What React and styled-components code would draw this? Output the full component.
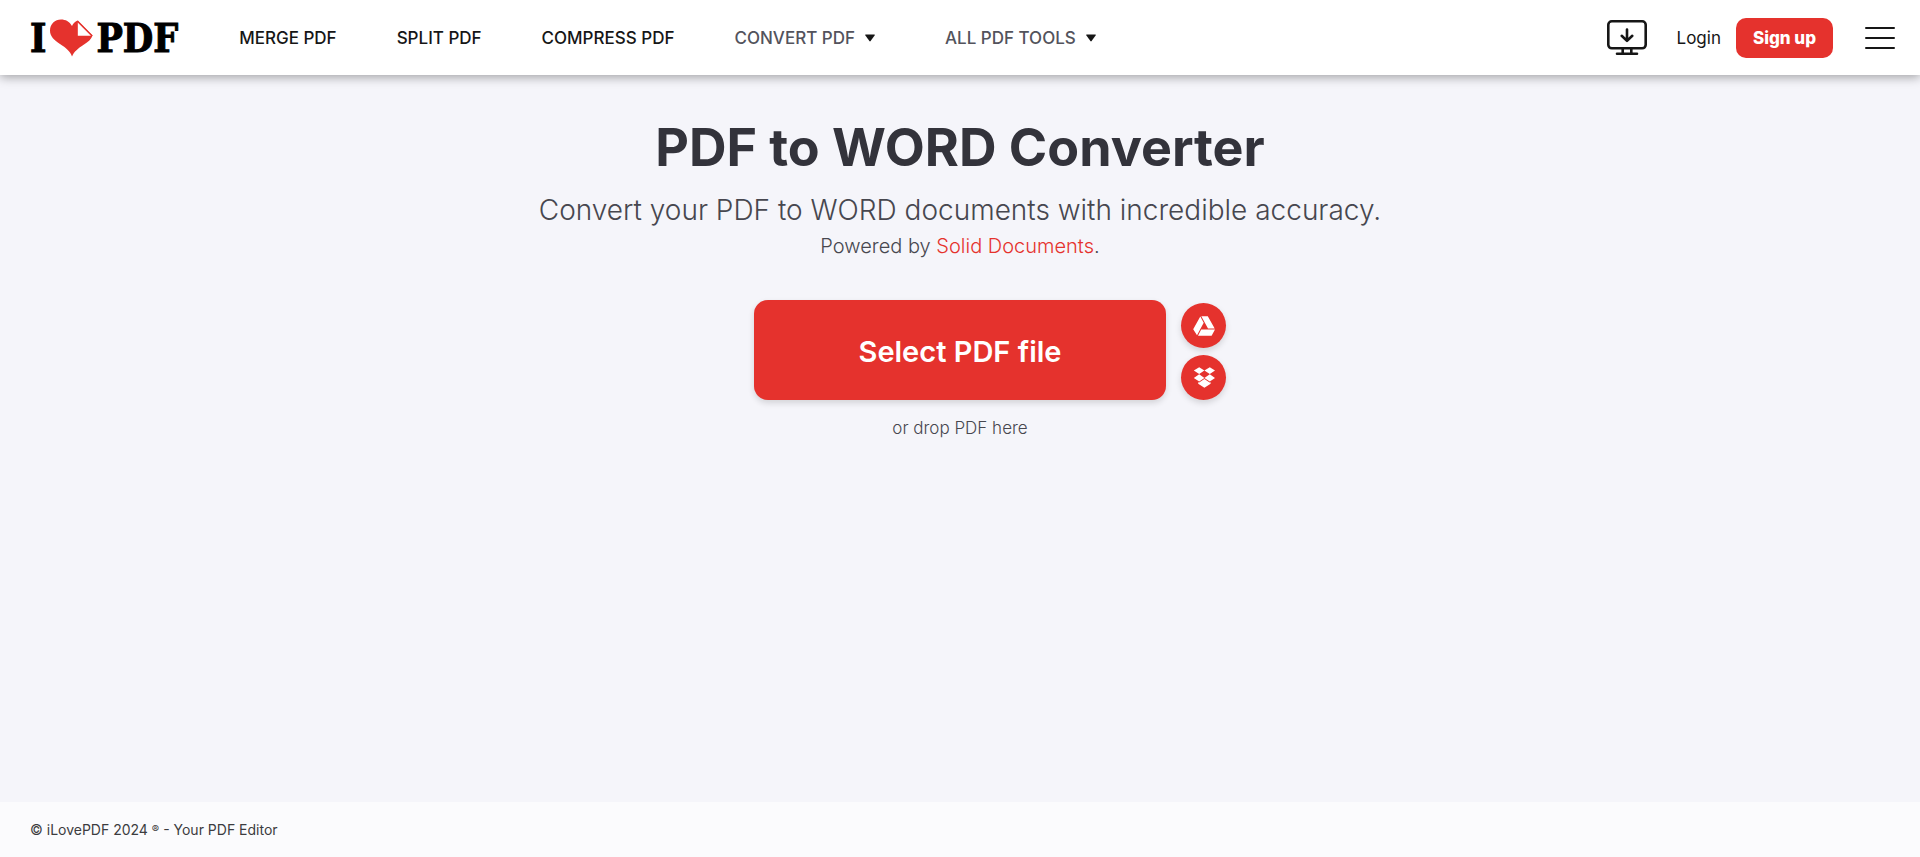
import React from 'react';
import styled, { createGlobalStyle, ThemeProvider } from 'styled-components';

const theme = {
  red: '#e5322d',
  ink: '#161616',
  title: '#33333b',
  text: '#47474f',
  page: '#f5f5fa',
  footer: '#fbfbfd',
};

const GlobalStyle = createGlobalStyle`
  *, *::before, *::after { box-sizing: border-box; }
  body {
    margin: 0;
    background: ${theme.page};
    color: ${theme.text};
    font-family: Inter, "Liberation Sans", sans-serif;
  }
  button { font: inherit; cursor: pointer; border: 0; }
  a { text-decoration: none; }
`;

const Page = styled.div`
  min-height: 100vh;
  display: flex;
  flex-direction: column;
`;

const Header = styled.header`
  display: flex;
  align-items: center;
  height: 75px;
  padding: 0 24px 0 30px;
  background: #fff;
  box-shadow: 0 2px 10px rgba(0, 0, 0, 0.36);
`;

const Brand = styled.a`
  display: flex;
  align-items: center;
  margin-right: 31px;
  color: #000;
  font: bold 39px/48px "DejaVu Serif Condensed", "DejaVu Serif", serif;
  -webkit-text-stroke: 1px #000;
`;

const Heart = styled.svg`
  width: 43px;
  height: 38px;
  margin: 0 3px 0 4px;
`;

const Nav = styled.nav`
  display: flex;
  flex: 1;
`;

const NavItem = styled.a`
  display: flex;
  align-items: center;
  gap: 10px;
  padding: 0 ${({ $muted }) => ($muted ? '40px' : '30px')} 0 30px;
  color: ${({ $muted, theme }) => ($muted ? '#53535c' : theme.ink)};
  font-size: 17px;
  line-height: 24px;
  font-weight: 500;
  white-space: nowrap;
`;

const Caret = styled.svg`
  width: 10px;
  height: 8px;
  fill: ${({ theme }) => theme.ink};
`;

const Actions = styled.div`
  display: flex;
  align-items: center;
`;

const DesktopLink = styled.a`
  display: flex;
  margin-right: 28px;
  color: ${({ theme }) => theme.ink};
`;

const LoginLink = styled.a`
  margin-right: 15px;
  color: ${({ theme }) => theme.ink};
  font-size: 17px;
  line-height: 24px;
`;

const SignUp = styled.button`
  height: 40px;
  padding: 0 17px;
  border-radius: 10px;
  background: ${({ theme }) => theme.red};
  color: #fff;
  font-size: 17px;
  font-weight: 800;
`;

const MenuButton = styled.button`
  display: flex;
  margin-left: 31px;
  padding: 0;
  background: none;
  color: ${({ theme }) => theme.ink};
`;

const Main = styled.main`
  flex: 1;
  padding-top: 41px;
  text-align: center;
`;

const Title = styled.h1`
  margin: 0;
  color: ${({ theme }) => theme.title};
  font-size: 52px;
  line-height: 64px;
  font-weight: 700;
`;

const Subtitle = styled.h2`
  margin: 12px 0 0;
  font-size: 28px;
  line-height: 36px;
  font-weight: 300;
`;

const Powered = styled.p`
  margin: 5px 0 0;
  font-size: 20px;
  line-height: 26px;
  font-weight: 300;

  a { color: ${({ theme }) => theme.red}; }
`;

const Uploader = styled.div`
  display: grid;
  grid-template-columns: 1fr auto 1fr;
  align-items: end;
  column-gap: 15px;
  margin-top: 41px;
`;

const SelectButton = styled.button`
  grid-column: 2;
  width: 412px;
  height: 100px;
  padding: 2px 0 0;
  border-radius: 14px;
  background: ${({ theme }) => theme.red};
  box-shadow: 0 3px 6px rgba(0, 0, 0, 0.14);
  color: #fff;
  font-size: 29px;
  font-weight: 600;
`;

const CloudList = styled.div`
  display: flex;
  flex-direction: column;
  gap: 7px;
`;

const CloudButton = styled.button`
  display: flex;
  align-items: center;
  justify-content: center;
  width: 45px;
  height: 45px;
  padding: 0;
  border-radius: 50%;
  background: ${({ theme }) => theme.red};
  box-shadow: 0 3px 6px rgba(0, 0, 0, 0.14);

  svg { width: 24px; height: 24px; fill: #fff; }
`;

const DropHint = styled.p`
  margin: 16px 0 0;
  font-size: 17px;
  line-height: 24px;
  font-weight: 300;
`;

const Footer = styled.footer`
  padding: 16px 30px 15px;
  background: ${({ theme }) => theme.footer};
  color: #3c3c40;
  font-size: 14px;
  line-height: 24px;
  font-weight: 400;
`;

const Registered = styled.sup`
  font-size: 11px;
  line-height: 0;
  vertical-align: 2px;
`;

const navItems = [
  { label: 'MERGE PDF' },
  { label: 'SPLIT PDF' },
  { label: 'COMPRESS PDF' },
  { label: 'CONVERT PDF', menu: true },
  { label: 'ALL PDF TOOLS', menu: true },
];

function HeartIcon() {
  return (
    <Heart viewBox="0 0 43 38" aria-hidden="true">
      <path
        fill="#e5322d"
        d="M22 37.500C20 32 16 29 10 25C4 21 0 17.500 0 11.500C0 5 5 .5 11 .5C15.500 .5 19.500 2.500 22 7C23 4.500 25 2.500 27.500 1.500L42.500 16.500C41.500 20 38 23 34 25.500C28 29.500 24 32.500 22 37.500Z"
      />
      <path fill="#fff" d="M27.800 3.500L41 16.700H27.800Z" />
      <path fill="none" stroke="#e5322d" strokeWidth="1.200" d="M27.500 2L42.300 16.800" />
    </Heart>
  );
}

function DesktopIcon() {
  return (
    <svg width="42" height="37" viewBox="0 0 42 37" fill="none" stroke="currentColor" strokeWidth="2.600" strokeLinecap="round" strokeLinejoin="round" aria-hidden="true">
      <rect x="1.300" y="2.300" width="37.400" height="27" rx="3.500" />
      <path d="M15.700 29.500V33.700M24.300 29.500V33.700M10 34.700H30" />
      <path d="M20 10.500V21.500M14.700 16.800L20 21.900L25.300 16.800" />
    </svg>
  );
}

export default function App() {
  return (
    <ThemeProvider theme={theme}>
      <GlobalStyle />
      <Page>
        <Header>
          <Brand href="#" aria-label="I love PDF">
            <span>I</span>
            <HeartIcon />
            <span>PDF</span>
          </Brand>
          <Nav>
            {navItems.map(({ label, menu }) => (
              <NavItem key={label} href="#" $muted={menu}>
                {label}
                {menu && (
                  <Caret viewBox="0 0 10 8" aria-hidden="true">
                    <path d="M.8 .5H9.200Q10.300 .5 9.600 1.500L5.600 7Q5 7.800 4.400 7L.4 1.500Q-.3 .5 .8 .5Z" />
                  </Caret>
                )}
              </NavItem>
            ))}
          </Nav>
          <Actions>
            <DesktopLink href="#" aria-label="Desktop app">
              <DesktopIcon />
            </DesktopLink>
            <LoginLink href="#">Login</LoginLink>
            <SignUp type="button">Sign up</SignUp>
            <MenuButton type="button" aria-label="Menu">
              <svg width="32" height="24" viewBox="0 0 32 24" fill="none" stroke="currentColor" strokeWidth="2" strokeLinecap="round">
                <path d="M2 2H30M2 12H30M2 22H30" />
              </svg>
            </MenuButton>
          </Actions>
        </Header>

        <Main>
          <Title>PDF to WORD Converter</Title>
          <Subtitle>Convert your PDF to WORD documents with incredible accuracy.</Subtitle>
          <Powered>
            Powered by <a href="#">Solid Documents</a>.
          </Powered>
          <Uploader>
            <SelectButton type="button">Select PDF file</SelectButton>
            <CloudList>
              <CloudButton type="button" aria-label="Select from Google Drive">
                <svg viewBox="0 0 24 24" aria-hidden="true">
                  <path d="M8.300 2.600L11.700 8.800L5 21.200L1.200 15.200ZM9.300 2.200H15.800L22.700 14.600H16ZM9.200 15.500H23L19.600 21.700H6Z" />
                </svg>
              </CloudButton>
              <CloudButton type="button" aria-label="Select from Dropbox">
                <svg viewBox="0 0 24 24" aria-hidden="true">
                  <path d="M7.200 1.200L12.400 4.600L7.200 8L1.800 4.600ZM17.800 1.200L23 4.600L17.800 8L12.400 4.600ZM7.200 8.300L12.400 12L7.200 15.600L1.800 11.900ZM17.800 8.300L23 11.900L17.800 15.600L12.400 12ZM12.400 13L17.600 16.600L18.600 16.300V17.700L12.400 21.800L6.200 17.700V16.300L7.200 16.600Z" />
                </svg>
              </CloudButton>
            </CloudList>
          </Uploader>
          <DropHint>or drop PDF here</DropHint>
        </Main>

        <Footer>
          © iLovePDF 2024 <Registered>®</Registered> - Your PDF Editor
        </Footer>
      </Page>
    </ThemeProvider>
  );
}
